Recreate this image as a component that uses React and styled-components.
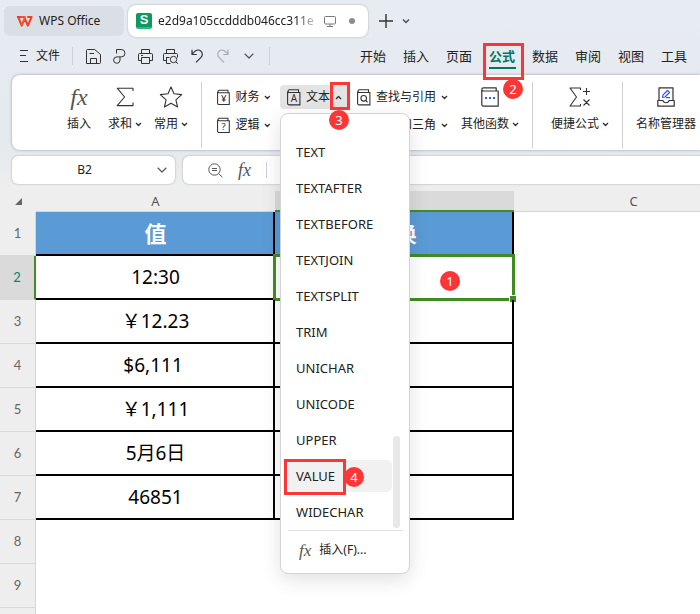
import React from "react";
import styled, { createGlobalStyle, css } from "styled-components";

const GlobalStyle = createGlobalStyle`
    * {
        box-sizing: border-box;
    }

    body {
        margin: 0;
        background: #eeeeee;
        color: #222;
        font: 12px/16px "Noto Sans", "Noto Sans CJK SC", sans-serif;
    }

    button, input {
        font: inherit;
        color: inherit;
        margin: 0;
        padding: 0;
        border: 0;
        background: none;
    }
`

const Page = styled.div`
    display: flex;
    flex-direction: column;
    height: 100vh;
    overflow: hidden;
    background: linear-gradient(#e7ebf2 0, #e5eaef 150px, #eeeeee 190px);
`

const TitleBar = styled.header`
    display: flex;
    align-items: center;
    height: 37px;
    padding: 5px 4px 0;
`

const AppTab = styled.button`
    display: flex;
    align-items: center;
    gap: 6px;
    width: 120px;
    height: 30px;
    padding-left: 13px;
    border-radius: 6px;
    background: #dadee5;
`

const DocTab = styled.div`
    display: flex;
    align-items: center;
    width: 240px;
    height: 32px;
    margin: 0 11px 0 4px;
    padding: 0 13px 0 8px;
    border-radius: 8px;
    background: #fff;
    box-shadow: 0 0 2px rgba(0, 0, 0, 0.3);
`

const SheetBadge = styled.span`
    width: 16px;
    height: 16px;
    margin-right: 6px;
    border-radius: 2px;
    border-bottom: 2px solid #35b97e;
    background: #109861;
    color: #fff;
    font: bold 13px/14px "Liberation Sans", sans-serif;
    text-align: center;
`

const DocName = styled.span`
    flex: 1;
    overflow: hidden;
    white-space: nowrap;
    margin-right: 4px;
    mask-image: linear-gradient(to right, #000 138px, transparent 162px);
`

const Dot = styled.span`
    width: 6px;
    height: 6px;
    margin-left: 13px;
    border-radius: 50%;
    background: #8c8c8c;
`

const IconButton = styled.button`
    display: flex;
    align-items: center;
    justify-content: center;
    width: ${({ $width }) => $width || 26}px;
    height: 24px;
    opacity: ${({ disabled }) => (disabled ? 0.35 : 1)};
`

const MenuBar = styled.nav`
    display: flex;
    align-items: center;
    height: 38px;
    padding-left: 17px;
`

const FileButton = styled.button`
    display: flex;
    align-items: center;
    gap: 5px;
    padding-right: 12px;
`

const Rule = styled.span`
    align-self: center;
    width: 1px;
    height: ${({ $height }) => $height}px;
    margin: ${({ $margin }) => $margin || "0"};
    background: #cdd0d4;
`

const Tabs = styled.div`
    display: flex;
    gap: 5px;
    margin-left: 84px;
`

const RibbonTab = styled.button`
    position: relative;
    width: 38px;
    height: 26px;
    font-size: 13px;
    line-height: 18px;
    flex: none;

    ${({ $active }) => $active && css`
        color: #00765f;
        font-weight: bold;

        &::before {
            content: "";
            position: absolute;
            inset: auto 5px 0 6px;
            height: 2px;
            background: #00765f;
        }
    `}
`

const Frame = styled.span`
    position: absolute;
    z-index: 2;
    border: 3px solid #fb3636;
    pointer-events: none;
`

const TabFrame = styled(Frame)`
    inset: 0 -3px -11px 0;
`

const ArrowFrame = styled(Frame)`
    inset: -3px -2px -1px auto;
    width: 20px;
`

const ItemFrame = styled(Frame)`
    inset: -1px auto -3px -4px;
    width: 62px;
`

const Step = styled.span`
    position: absolute;
    z-index: 3;
    left: ${({ $left }) => $left}px;
    top: ${({ $top }) => $top}px;
    width: 20px;
    height: 20px;
    border-radius: 50%;
    background: #fb3636;
    color: #fff;
    font: 13px/20px "Noto Sans", sans-serif;
    text-align: center;
`

const Ribbon = styled.section`
    position: relative;
    display: flex;
    align-items: flex-start;
    flex: none;
    height: 75px;
    margin-left: 12px;
    padding: 10px 0 0 55px;
    border-radius: 8px 0 0 8px;
    background: #fff;
    box-shadow: 0 0 3px rgba(0, 0, 0, 0.35);
    white-space: nowrap;

    > ${Rule} {
        margin-top: -6px;
    }
`

const BigButton = styled.button`
    display: flex;
    flex-direction: column;
    align-items: center;
    gap: 7px;
    flex: none;
    margin-right: ${({ $after }) => $after || 0}px;
`

const IconSlot = styled.span`
    display: flex;
    align-items: center;
    justify-content: center;
    height: 24px;
`

const Label = styled.span`
    display: flex;
    align-items: center;
    gap: 3px;
`

const Library = styled.div`
    display: grid;
    grid-template-columns: 68px 68px auto;
    gap: 4px 2px;
    margin: 0 6px 0 8px;
`

const Anchor = styled.div`
    position: relative;
    z-index: 1;
`

const SmallButton = styled.button`
    display: flex;
    align-items: center;
    gap: 5px;
    height: 24px;
    padding: 0 7px;
    border-radius: 4px;
    background: ${({ $open }) => ($open ? "#e4e4e4" : "none")};
`

const Menu = styled.div`
    position: absolute;
    top: 28px;
    left: 0;
    width: 130px;
    padding-bottom: 7px;
    border: 1px solid #d3d4d6;
    border-radius: 8px;
    background: #fff;
    box-shadow: 0 6px 20px rgba(0, 0, 0, 0.12);
`

const MenuBody = styled.div`
    display: flex;
    align-items: flex-end;
    gap: 1px;
    padding: 22px 7px 2px;
`

const MenuList = styled.div`
    display: flex;
    flex-direction: column;
    gap: 4px;
    width: 104px;
    font-size: 13px;
`

const MenuItem = styled.button`
    position: relative;
    display: flex;
    align-items: center;
    gap: 8px;
    height: 32px;
    padding-left: 8px;
    border-radius: 5px;
    background: ${({ $active }) => ($active ? "#f1f1f1" : "none")};
`

const Thumb = styled.span`
    width: 7px;
    height: 92px;
    border-radius: 4px;
    background: #e7e8ea;
`

const MenuFooter = styled.div`
    margin: 0 6px 0 7px;
    padding: 3px 0 0 3px;
    border-top: 1px solid #dedfe1;
`

const FormulaRow = styled.div`
    display: flex;
    gap: 8px;
    flex: none;
    height: 41px;
    padding: 6px 0 7px 12px;
`

const Field = styled.label`
    display: flex;
    align-items: center;
    border-radius: 6px;
    background: #fff;
    box-shadow: 0 0 2px rgba(0, 0, 0, 0.35);
`

const NameField = styled(Field)`
    width: 163px;
    padding-right: 7px;

    input {
        width: 145px;
        text-align: center;
    }
`

const FormulaField = styled(Field)`
    flex: 1;
    gap: 15px;
    padding-left: 25px;
    border-radius: 6px 0 0 6px;

    input {
        flex: 1;
        min-width: 0;
    }
`

const Fx = styled.span`
    font: italic ${({ $size }) => $size}px/${({ $size }) => $size}px "Liberation Serif", serif;
    color: #555;
`

const SheetArea = styled.main`
    flex: 1;
    min-height: 0;
    overflow: hidden;
`

const Grid = styled.table`
    table-layout: fixed;
    width: 753px;
    border-spacing: 0;
    background: #fff;

    col:first-child {
        width: 36px;
    }
`

const Corner = styled.td`
    padding: 0 14px 0 0;
    height: 21px;
    background: #eeeeee;
    text-align: right;

    svg {
        display: block;
        margin-left: auto;
    }
`

const ColumnHead = styled.th`
    height: 21px;
    padding: 0;
    border-bottom: ${({ $active }) => ($active ? "2px solid #418c22" : "1px solid #d6d6d6")};
    background: ${({ $active }) => ($active ? "#dadada" : "#eeeeee")};
    color: #555;
    font: 13px/16px "Noto Sans", sans-serif;
`

const RowHead = styled.th`
    height: 44px;
    padding: 0 0 2px;
    border-bottom: 1px solid #d9d9d9;
    border-right: ${({ $active }) => ($active ? "2px solid #418c22" : "1px solid #d6d6d6")};
    background: ${({ $active }) => ($active ? "#dadada" : "#eeeeee")};
    color: ${({ $active }) => ($active ? "#00856b" : "#666")};
    font: 13px/16px Lato, sans-serif;
`

const Cell = styled.td`
    position: relative;
    padding: 0 0 0 2px;
    text-align: center;
    font-size: 19px;
    line-height: 24px;
    color: #000;

    ${({ $boxed }) => $boxed && css`
        border-right: 2px solid #000;
        border-bottom: 2px solid #000;
    `}

    ${({ $title }) => $title && css`
        background: #5b9bd5;
        color: #fff;
        font-size: 22px;
        font-weight: bold;
    `}
`

const Selection = styled.span`
    position: absolute;
    inset: -2px -3px -3px -2px;
    border: 3px solid #418c22;

    &::after {
        content: "";
        position: absolute;
        right: -4px;
        bottom: -4px;
        width: 6px;
        height: 6px;
        border: solid #fff;
        border-width: 1px 0 0 1px;
        background: #418c22;
    }
`

const Svg = ({ w, h, children, color = "#333", strokeWidth = 1 }) => (
    <svg
        width={w}
        height={h}
        viewBox={`0 0 ${w} ${h}`}
        fill="none"
        stroke={color}
        strokeWidth={strokeWidth}
        strokeLinejoin="round"
        aria-hidden="true"
    >
        {children}
    </svg>
)

const Caret = ({ up }) => (
    <Svg w={7} h={5} strokeWidth={1.4}>
        <path d={up ? "M1 4l2.5-2.5L6 4" : "M1 1l2.5 2.5L6 1"} />
    </Svg>
)

const Chevron = ({ size = 10 }) => (
    <Svg w={10} h={6} color="#555" strokeWidth={size > 9 ? 1.2 : 1.6}>
        <path d={size > 9 ? "M.7.8L5 5 9.3.8" : "M2 1.5l3 3 3-3"} />
    </Svg>
)

const Book = ({ char }) => (
    <svg width="14" height="17" viewBox="0 0 14 17" fill="none" stroke="#333" strokeWidth="1.1" aria-hidden="true">
        <path d="M.6 2.5V14.4a1.5 1.5 0 0 0 1.5 1.5h10.8V3.5H2.1A1.4 1.4 0 0 1 2.1.8h9.4v2.7" />
        {char ? (
            <text x="7" y="13" textAnchor="middle" fontFamily="Noto Sans" fontSize="10" fill="#333" stroke="none">{char}</text>
        ) : (
            <>
                <circle cx="6.7" cy="9.3" r="2.8" />
                <path d="M8.7 11.4l1.9 2" />
            </>
        )}
    </svg>
)

const WpsLogo = () => (
    <svg width="16" height="11" viewBox="0 0 16 11" fill="none" strokeWidth="2" strokeLinejoin="round" aria-hidden="true">
        <path d="M0 1h8.5" stroke="#f5323c" />
        <path d="M1.2 1l3.5 8.6L7.8 2.5l3 7.1L14.6 1h-4.4" stroke="#f4402b" />
        <path d="M3.5 1h4.3L4.7 9.6" stroke="#ff5a22" strokeWidth="1.4" />
    </svg>
)

const Sigma = () => (
    <Svg w={18} h={20} strokeWidth={1.1}>
        <path d="M17 4V1.2H1.2L8.6 10l-7.4 8.6H17v-3" />
    </Svg>
)

const Star = () => (
    <Svg w={24} h={22} strokeWidth={1.1}>
        <path d="M12 1l3 6.800 7.700.8-5.800 5.200 1.700 7.200-6.600-3.800-6.600 3.800 1.700-7.200-5.800-5.200L9 7.800z" />
    </Svg>
)

const MoreBook = () => (
    <Svg w={18} h={20} strokeWidth={1.2}>
        <path d="M.8 3v14.6a1.6 1.6 0 0 0 1.6 1.6h14.800V4H2.400A1.6 1.6 0 0 1 2.400.8h12.800V4" />
        <path d="M4 11h2M8 11h2M12 11h2" stroke="#2f5fe0" strokeWidth="2" />
    </Svg>
)

const QuickFormula = () => (
    <Svg w={22} h={20} strokeWidth={1.1}>
        <path d="M11.5 3V1H1l6.5 9L1 19h10.500v-2M14 4.500h7M17.500 1v7M14.500 12.500l6 6M20.500 12.500l-6 6" />
    </Svg>
)

const NameManager = () => (
    <Svg w={18} h={20} strokeWidth={1.2}>
        <path d="M2 13V.8h14V13M.8 13.500H6c.5 3 5.500 3 6 0h5.200v5.700H.8z" />
        <path d="M5.500 10.500l.5-2.500 4.500-4.500 2 2L8 10l-2.500.5zM9 10.600h4" stroke="#2f5fe0" />
    </Svg>
)

const SaveIcon = () => (
    <Svg w={15} h={15}>
        <path d="M.5 14.500V1.500a1 1 0 0 1 1-1h7.200l5.800 5v8a1 1 0 0 1-1 1zM3.500 4.500h4.500M4.500 14.500v-5h6v5" />
    </Svg>
)

const ExportIcon = () => (
    <Svg w={13} h={15}>
        <path d="M3.500 4.500V.5h4.800a3.700 3.700 0 0 1 0 7.400H7v3.300a3.200 3.200 0 1 1-3.200-3.300H7" />
    </Svg>
)

const PrintIcon = () => (
    <Svg w={15} h={15}>
        <path d="M3.500 4.500v-4h8v4M3.500 11.500H.5v-6a1 1 0 0 1 1-1h12a1 1 0 0 1 1 1v6h-3M3.500 8.500h8v6h-8zM3 6.500h2" />
    </Svg>
)

const PreviewIcon = () => (
    <Svg w={16} h={15}>
        <path d="M3.500 4.500v-4h8v4M3.500 11.500H.5v-6a1 1 0 0 1 1-1h12a1 1 0 0 1 1 1v3M3.500 8v6.500h4M3.500 8.500h3" />
        <circle cx="10.500" cy="10.500" r="3.200" />
        <path d="M12.800 12.800l2.200 2" />
    </Svg>
)

const UndoIcon = ({ redo }) => (
    <Svg w={12} h={14} strokeWidth={1.2}>
        <path
            transform={redo ? "translate(12 0) scale(-1 1)" : undefined}
            d="M1 .8v4.700h4.700M1 5.200l2.500-2.600c2-2 4.800-2 6.500-.4 1.800 1.800 1.700 4.500 0 6.200l-5 5"
        />
    </Svg>
)

const ScreenIcon = () => (
    <Svg w={12} h={11} color="#777">
        <path d="M.5 1.500a1 1 0 0 1 1-1h9a1 1 0 0 1 1 1v5.500a1 1 0 0 1-1 1h-9a1 1 0 0 1-1-1zM6 8v2M3 10.500h6" />
    </Svg>
)

const ZoomOut = () => (
    <Svg w={15} h={15} color="#555">
        <circle cx="6.500" cy="6.500" r="5.700" />
        <path d="M10.700 10.700l3.800 3.500M4 5.500h5M4 7.500h5" />
    </Svg>
)

const tabs = ["开始", "插入", "页面", "公式", "数据", "审阅", "视图", "工具"]

const functions = [
    "TEXT", "TEXTAFTER", "TEXTBEFORE", "TEXTJOIN", "TEXTSPLIT", "TRIM",
    "UNICHAR", "UNICODE", "UPPER", "VALUE", "WIDECHAR",
]

// currency in dollars keeps a trailing blank for the closing bracket
const rows = ["值", "12:30", "￥12.23", "$6,111\u00a0", "￥1,111", "5月6日", "46851", "", ""]

const Big = ({ icon, label, caret, after }) => (
    <BigButton $after={after}>
        <IconSlot>{icon}</IconSlot>
        <Label>{label}{caret && <Caret />}</Label>
    </BigButton>
)

const Small = ({ char, label, open }) => (
    <SmallButton $open={open} aria-expanded={open}>
        <Book char={char} />
        {label}
        <Caret up={open} />
    </SmallButton>
)

const TextMenu = () => (
    <Menu>
        <MenuBody>
            <MenuList>
                {functions.map(name => (
                    <MenuItem key={name} $active={name === "VALUE"}>
                        {name}
                        {name === "VALUE" && (
                            <>
                                <ItemFrame />
                                <Step $left={56} $top={7}>4</Step>
                            </>
                        )}
                    </MenuItem>
                ))}
            </MenuList>
            <Thumb />
        </MenuBody>
        <MenuFooter>
            <MenuItem><Fx $size={17}>fx</Fx>插入(F)...</MenuItem>
        </MenuFooter>
    </Menu>
)

const Sheet = () => (
    <SheetArea>
        <Grid>
            <colgroup><col /><col /><col /><col /></colgroup>
            <thead>
                <tr>
                    <Corner>
                        <svg width="7" height="7" viewBox="0 0 7 7"><path d="M7 0v7H0z" fill="#666" /></svg>
                    </Corner>
                    <ColumnHead>A</ColumnHead>
                    <ColumnHead $active aria-label="B" />
                    <ColumnHead>C</ColumnHead>
                </tr>
            </thead>
            <tbody>
                {rows.map((value, i) => (
                    <tr key={i}>
                        <RowHead $active={i === 1}>{i + 1}</RowHead>
                        <Cell $boxed={i < 7} $title={i === 0}>{value}</Cell>
                        <Cell $boxed={i < 7} $title={i === 0}>
                            {i === 0 && "转换"}
                            {i === 1 && (
                                <>
                                    <Selection />
                                    <Step $left={165} $top={15}>1</Step>
                                </>
                            )}
                        </Cell>
                        <Cell />
                    </tr>
                ))}
                <tr>
                    <RowHead />
                    <Cell colSpan={3} />
                </tr>
            </tbody>
        </Grid>
    </SheetArea>
)

const App = () => (
    <>
        <GlobalStyle />
        <Page>
            <TitleBar>
                <AppTab><WpsLogo />WPS Office</AppTab>
                <DocTab>
                    <SheetBadge>S</SheetBadge>
                    <DocName>e2d9a105ccdddb046cc311e</DocName>
                    <ScreenIcon />
                    <Dot />
                </DocTab>
                <IconButton $width={14} aria-label="New">
                    <Svg w={14} h={14} strokeWidth={1.4}><path d="M7 0v14M0 7h14" /></Svg>
                </IconButton>
                <IconButton aria-label="All tabs"><Chevron size={7} /></IconButton>
            </TitleBar>
            <MenuBar>
                <FileButton>
                    <Svg w={14} h={12}><path d="M3 .5h8M3 5.500h6M3 11.500h8" /></Svg>
                    文件
                </FileButton>
                <Rule $height={18} $margin="0 7px 0 0" />
                <IconButton aria-label="Save"><SaveIcon /></IconButton>
                <IconButton aria-label="Export"><ExportIcon /></IconButton>
                <IconButton aria-label="Print"><PrintIcon /></IconButton>
                <IconButton aria-label="Preview"><PreviewIcon /></IconButton>
                <IconButton aria-label="Undo"><UndoIcon /></IconButton>
                <IconButton aria-label="Redo" disabled><UndoIcon redo /></IconButton>
                <IconButton aria-label="More"><Chevron /></IconButton>
                <Rule $height={18} $margin="0 0 0 7px" />
                <Tabs>
                    {tabs.map(tab => (
                        <RibbonTab key={tab} $active={tab === "公式"}>
                            {tab}
                            {tab === "公式" && (
                                <>
                                    <TabFrame />
                                    <Step $left={20} $top={36}>2</Step>
                                </>
                            )}
                        </RibbonTab>
                    ))}
                </Tabs>
            </MenuBar>
            <Ribbon>
                <Big icon={<Fx $size={24}>fx</Fx>} label="插入" after={17} />
                <Big icon={<Sigma />} label="求和" caret after={12} />
                <Big icon={<Star />} label="常用" caret after={13} />
                <Rule $height={66} />
                <Library>
                    <Small char="¥" label="财务" />
                    <Anchor>
                        <Small char="A" label="文本" open />
                        <ArrowFrame />
                        <TextMenu />
                        <Step $left={49} $top={25}>3</Step>
                    </Anchor>
                    <Small label="查找与引用" />
                    <Small char="?" label="逻辑" />
                    <Small label="日期" />
                    <Small char="θ" label="数学和三角" />
                </Library>
                <Big icon={<MoreBook />} label="其他函数" caret after={13} />
                <Rule $height={66} $margin="0 18px 0 0" />
                <Big icon={<QuickFormula />} label="便捷公式" caret after={13} />
                <Rule $height={66} $margin="0 13px 0 0" />
                <Big icon={<NameManager />} label="名称管理器" />
            </Ribbon>
            <FormulaRow>
                <NameField>
                    <input aria-label="Name box" defaultValue="B2" />
                    <Chevron />
                </NameField>
                <FormulaField>
                    <ZoomOut />
                    <Fx $size={18}>fx</Fx>
                    <Rule $height={16} />
                    <input aria-label="Formula" />
                </FormulaField>
            </FormulaRow>
            <Sheet />
        </Page>
    </>
)

export default App;
